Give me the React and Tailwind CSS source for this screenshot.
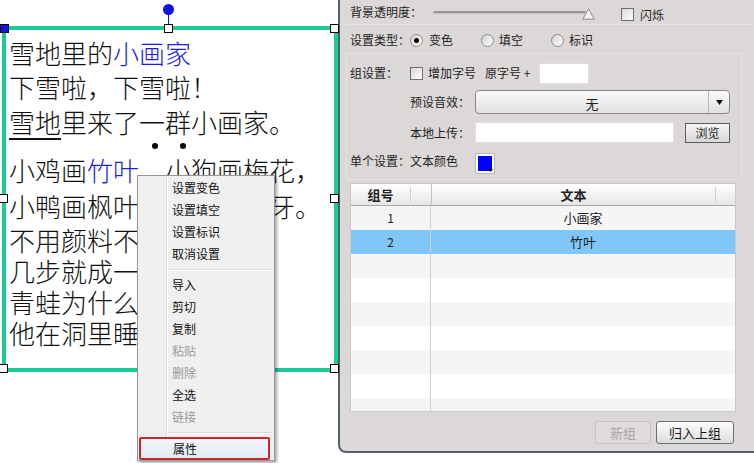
import React from 'react';

const Checkbox = () => (
  <span className="block w-[13px] h-[13px] border border-[#6f6f6f] bg-gradient-to-br from-[#d8d8d8] to-white shrink-0" />
);

const Radio = ({ checked }) => (
  <span className="flex items-center justify-center w-[13px] h-[13px] rounded-full border border-[#8a8a8a] bg-gradient-to-br from-[#d4d4d4] to-white shrink-0">
    {checked && <span className="block w-[5px] h-[5px] rounded-full bg-black" />}
  </span>
);

const Handle = ({ className, blue }) => (
  <span
    className={`absolute w-[9px] h-[9px] border border-black ${blue ? 'bg-[#0a16e6] border-[#0a16e6]' : 'bg-white'} ${className}`}
  />
);

const menuItems = [
  { label: '设置变色' },
  { label: '设置填空' },
  { label: '设置标识' },
  { label: '取消设置' },
  { sep: true },
  { label: '导入' },
  { label: '剪切' },
  { label: '复制' },
  { label: '粘贴', disabled: true },
  { label: '删除', disabled: true },
  { label: '全选' },
  { label: '链接', disabled: true },
  { sep: true },
  { label: '属性', active: true },
];

const rows = [
  { no: '1', text: '小画家' },
  { no: '2', text: '竹叶', selected: true },
  {}, {}, {}, {}, {}, {}, {},
];

const ContextMenu = () => (
  <div className="absolute left-[137px] top-[175px] w-[138px] h-[286px] border border-[#979797] pt-[1px] bg-[linear-gradient(to_right,#f0f0f0_28px,#dedede_28px,#dedede_29px,#ffffff_29px,#ffffff_30px,#f0f0f0_30px)] shadow-[2px_2px_3px_rgba(0,0,0,0.35)] text-[12px] font-['Noto_Sans_CJK_SC',sans-serif]">
    {menuItems.map((item, i) =>
      item.sep ? (
        <div key={i} className="h-[9px] flex flex-col justify-center pl-[30px] pr-[2px]">
          <div className="h-px bg-[#dcdcdc]" />
          <div className="h-px bg-white" />
        </div>
      ) : item.active ? (
        <div
          key={i}
          className="h-[23px] ml-px mr-[4px] flex items-center pl-[32px] border-2 border-[#c8282a] rounded-[2px] bg-gradient-to-b from-[#f2f6fa] to-[#e2eaf2] text-[#111]"
        >
          {item.label}
        </div>
      ) : (
        <div
          key={i}
          className={`h-[22px] flex items-center pl-[34px] ${item.disabled ? 'text-[#9a9a9a]' : 'text-[#111]'}`}
        >
          {item.label}
        </div>
      )
    )}
  </div>
);

const Canvas = () => (
  <div className="relative w-[338px] h-full shrink-0 bg-white">
    {/* rotate handle */}
    <span className="absolute left-[163px] top-[4px] w-[11px] h-[11px] rounded-full bg-[#0a16e6]" />
    <span className="absolute left-[168px] top-[12px] w-[1px] h-[14px] bg-[#0a16e6]" />

    {/* text box */}
    <div className="absolute left-[2px] top-[26px] w-[336px] h-[346px] border-4 border-[#19cc98] pl-[3px] pt-[6px] text-[26px] leading-none text-[#111] font-light font-['Noto_Sans_CJK_SC',sans-serif]">
      <div className="h-[34px] flex items-center">
        雪地里的<span className="text-[#1c1ce8]">小画家</span>
      </div>
      <div className="h-[34px] flex items-center">下雪啦，下雪啦！</div>
      <div className="h-[36px] flex items-center">
        <span className="underline decoration-2 underline-offset-[5px]">雪地</span>里来了一群小画家。
      </div>
      <div className="relative h-[12px]">
        <span className="absolute left-[143px] top-[3px] w-[6px] h-[6px] rounded-full bg-black" />
        <span className="absolute left-[171px] top-[3px] w-[6px] h-[6px] rounded-full bg-black" />
      </div>
      <div className="h-[36px] flex items-center">
        小鸡画<span className="text-[#1c1ce8]">竹叶</span>，小狗画梅花，
      </div>
      <div className="h-[36px] flex items-center">小鸭画枫叶，小马画月牙。</div>
      <div className="h-[31px] flex items-center">不用颜料不用笔，</div>
      <div className="h-[31px] flex items-center">几步就成一幅画。</div>
      <div className="h-[31px] flex items-center">青蛙为什么没参加？</div>
      <div className="h-[32px] flex items-center">他在洞里睡着啦。</div>
    </div>

    <Handle blue className="left-0 top-[24px]" />
    <Handle className="left-[164px] top-[24px]" />
    <Handle className="left-[330px] top-[24px]" />
    <Handle className="left-[-1px] top-[194px]" />
    <Handle className="left-[330px] top-[194px]" />
    <Handle className="left-[-1px] top-[364px]" />
    <Handle className="left-[330px] top-[364px]" />

    <ContextMenu />
  </div>
);

const Panel = () => (
  <div className="w-[420px] h-[453px] shrink-0 bg-[#dcd8d7] border-l-2 border-b-2 border-[#56606b] rounded-bl-[8px] text-[12px] text-[#1e1e1e] font-['Noto_Sans_CJK_SC',sans-serif]">
    {/* 背景透明度 */}
    <div className="h-[24px] flex items-center pl-[10px]">
      <span className="w-[83px]">背景透明度：</span>
      <div className="relative w-[162px] h-[20px] flex items-center">
        <div className="w-[153px] h-[3px] rounded-full bg-[#9a9696] border-b border-[#c4c0c0]" />
        <svg className="absolute right-0 top-[6px]" width="13" height="12" viewBox="0 0 13 12">
          <path d="M6.5 0.8 L12.2 11.2 L0.8 11.2 Z" fill="#f2f2f2" stroke="#8a8a8a" strokeWidth="1" />
        </svg>
      </div>
      <span className="ml-[26px] mt-[5px] flex items-center">
        <Checkbox />
        <span className="ml-[6px]">闪烁</span>
      </span>
    </div>
    <div className="mx-[6px] h-px bg-[#e9e5e4]" />

    {/* 设置类型 */}
    <div className="h-[26px] mt-[2px] flex items-center pl-[10px]">
      <span className="w-[60px]">设置类型：</span>
      <Radio checked />
      <span className="ml-[6px] w-[52px]">变色</span>
      <Radio />
      <span className="ml-[5px] w-[52px]">填空</span>
      <Radio />
      <span className="ml-[5px]">标识</span>
    </div>

    {/* 组设置 */}
    <div className="ml-[6px] w-[396px] h-[127px] border border-[#e6e2e1] pl-[3px] pt-[8px]">
      <div className="h-[22px] flex items-center">
        <span className="w-[60px]">组设置：</span>
        <Checkbox />
        <span className="ml-[5px]">增加字号</span>
        <span className="ml-[9px]">原字号 +</span>
        <span className="ml-[9px] w-[50px] h-[21px] bg-white border border-[#e2dede]" />
      </div>
      <div className="h-[24px] mt-[6px] flex items-center pl-[60px]">
        <span className="w-[65px]">预设音效：</span>
        <div className="w-[255px] h-[24px] flex rounded-[4px] border border-[#8c8888] bg-gradient-to-b from-[#fbfbfb] to-[#e2e0e0]">
          <span className="flex-1 flex items-center justify-center pt-[4px] text-[13px]">无</span>
          <span className="w-[21px] flex items-center justify-center border-l border-[#b8b4b4]">
            <svg width="7" height="5" viewBox="0 0 7 5">
              <path d="M0 0 L7 0 L3.5 5 Z" fill="#111" />
            </svg>
          </span>
        </div>
      </div>
      <div className="h-[21px] mt-[8px] flex items-center pl-[60px]">
        <span className="w-[65px]">本地上传：</span>
        <span className="w-[199px] h-[21px] bg-white border border-[#e2dede]" />
        <span className="ml-[11px] w-[45px] h-[20px] flex items-center justify-center border border-[#5c5c5c] bg-gradient-to-b from-[#f6f6f6] to-[#d8d8d8]">
          浏览
        </span>
      </div>
      <div className="h-[22px] mt-[9px] flex items-center">
        <span className="w-[60px] -mt-[4px]">单个设置：</span>
        <span className="w-[65px] -mt-[4px]">文本颜色</span>
        <span className="relative w-[20px] h-[21px] p-[2px] bg-white border border-[#b8b8c0]">
          <span className="block w-full h-full bg-[#0000ff]" />
          <svg className="absolute right-[1px] bottom-[1px]" width="5" height="3" viewBox="0 0 5 3">
            <path d="M0 0 L5 0 L2.5 3 Z" fill="#111" />
          </svg>
        </span>
      </div>
    </div>

    {/* table */}
    <div className="ml-[10px] mt-[3px] w-[386px] h-[229px] border border-[#cbc8c8] bg-white flex flex-col overflow-hidden">
      <div className="h-[22px] shrink-0 flex bg-gradient-to-b from-white to-[#e6e6e6] border-b border-[#a8a8a8] font-bold text-[13px] text-[#222]">
        <span className="w-[59px] flex items-center justify-center">组号</span>
        <span className="w-[21px] my-[3px] border-l border-[#d0d0d0]" />
        <span className="w-[284px] flex items-center justify-center border-l border-[#c4c4c4]">文本</span>
        <span className="flex-1 my-[3px] border-l border-[#d0d0d0]" />
      </div>
      {rows.map((r, i) => (
        <div
          key={i}
          className={`h-[24px] shrink-0 flex ${r.selected ? 'bg-[#80c6f7]' : i % 2 === 0 ? 'bg-[#f5f5f5]' : 'bg-white'}`}
        >
          <span className="w-[80px] flex items-center justify-center border-r border-[#cfcfcf]">{r.no}</span>
          <span className="flex-1 flex items-center justify-center text-[13px]">{r.text}</span>
        </div>
      ))}
    </div>

    {/* buttons */}
    <div className="mt-[9px] ml-[255px] flex gap-[5px]">
      <span className="w-[56px] h-[23px] flex items-center justify-center rounded-[3px] border border-[#c6c2c2] bg-[#e0dcdb] text-[13px] text-[#a9a5a5]">
        新组
      </span>
      <span className="w-[78px] h-[23px] flex items-center justify-center rounded-[3px] border border-[#6e6e6e] bg-gradient-to-b from-[#fdfdfd] to-[#dcdcdc] text-[13px] text-[#1a1a1a]">
        归入上组
      </span>
    </div>
  </div>
);

export default function App() {
  return (
    <div className="w-[754px] h-[463px] flex bg-white overflow-hidden">
      <Canvas />
      <Panel />
    </div>
  );
}
